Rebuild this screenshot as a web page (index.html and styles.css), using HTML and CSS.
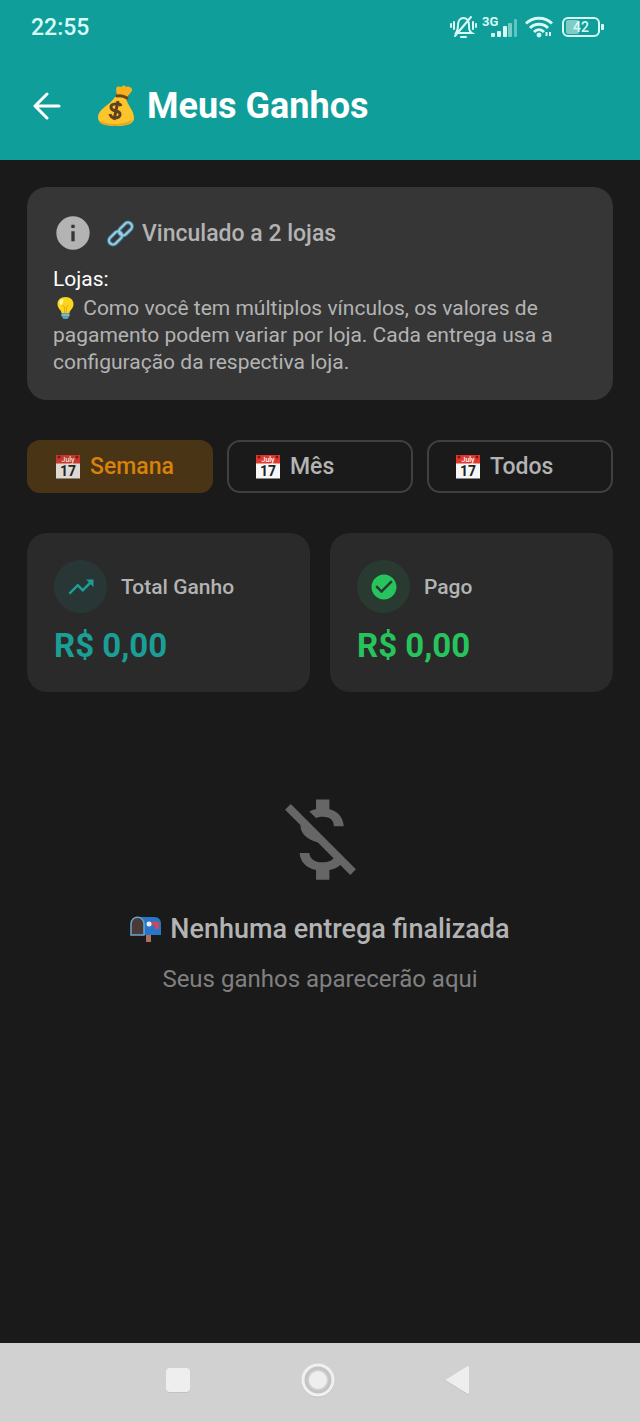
FILE: index.html
```html
<!DOCTYPE html>
<html lang="pt-BR">
<head>
<meta charset="utf-8">
<meta name="viewport" content="width=device-width, initial-scale=1">
<title>Meus Ganhos</title>
<link rel="stylesheet" href="styles.css">
</head>
<body>
<div class="screen">
  <header class="top">
    <div class="status">
      <span class="clock">22:55</span>
      <div class="status-icons">
        <svg width="27" height="26" viewBox="0 0 27 26" fill="none" stroke="#d8fbf7" stroke-width="2" stroke-linecap="round">
          <path d="M6 19h16c-3-2-3-4-3-8 0-4-2-7-5.500-7S8 7 8 11c0 4-.5 6-2 8zM5 22 21 3"/>
          <path d="M11 23h5"/>
          <path d="M1 10v3M4 8v7M23 8v7M26 10v3"/>
        </svg>
        <svg width="36" height="24" viewBox="0 0 36 24" fill="#d8fbf7">
          <text x="0" y="11" class="net">3G</text>
          <rect x="9" y="18" width="4" height="4" rx="1"/>
          <rect x="15" y="16" width="4" height="6" rx="1"/>
          <rect x="21" y="11" width="4" height="11" rx="1"/>
          <rect x="26" y="8" width="4" height="14" rx="1" opacity=".5"/>
          <rect x="32" y="4" width="3" height="18" rx="1" opacity=".4"/>
        </svg>
        <svg class="wifi" width="28" height="22" viewBox="0 0 28 22" fill="none" stroke="#d8fbf7" stroke-width="3">
          <path d="M1 7.500c7-7 19-7 26 0M5 12c5-5 13-5 18 0M9 16c3-3 7-3 10 0"/>
          <circle cx="14" cy="19" r="2" fill="#d8fbf7" stroke-width="1"/>
          <path stroke-width="2" d="M21.500 16v4M25 16v4"/>
        </svg>
        <svg width="43" height="20" viewBox="0 0 43 20" fill="none">
          <rect x="4" y="3" width="13" height="14" rx="2" fill="#7fcbc7"/>
          <rect x="1" y="1" width="36" height="18" rx="5" stroke="#d8fbf7" stroke-width="2"/>
          <rect x="39" y="7" width="3" height="6" rx="1" fill="#d8fbf7"/>
          <text x="19" y="15" class="battery">42</text>
        </svg>
      </div>
    </div>
    <div class="titlebar">
      <button class="back" type="button" aria-label="Voltar">
        <svg width="28" height="28" viewBox="0 0 28 28" fill="none" stroke="#fff" stroke-width="3" stroke-linecap="round" stroke-linejoin="round"><path d="M14 2 2 14l12 12M2 14h24"/></svg>
      </button>
      <h1>
        <svg width="38" height="42" viewBox="0 0 38 42" aria-hidden="true">
          <path fill="#f9b21d" d="M20 11c0-3-2-7 0-9 2-1 3 0 4 0 2-2 4-2 5 0 2-1 5 0 6 2 1 3-4 5-5 9z"/>
          <path fill="#fcc52c" d="M18 12c4-2 8-1 11 1 1 7 8 12 8 20 0 6-7 8-18 8S1 39 1 32c0-8 12-12 17-20z"/>
          <path fill="none" stroke="#eaa31c" stroke-width="2" d="M3 37c7 4 24 4 32-1"/>
          <path fill="none" stroke="#704414" stroke-width="3" stroke-linecap="round" d="M20 11c4-1 7 0 10 2"/>
          <path fill="none" stroke="#60401e" stroke-width="3" d="M24 21c-1-3-10-3-10 1 0 6 10 2 9 8-1 4-9 4-10-1M21 16l-4 19"/>
        </svg>
        Meus Ganhos
      </h1>
    </div>
  </header>

  <main class="content">
    <section class="notice">
      <div class="notice-head">
        <svg width="40" height="40" viewBox="0 0 24 24" fill="#b3b3b3"><path d="M13 9h-2V7h2m0 10h-2v-6h2m-1-9A10 10 0 0 0 2 12a10 10 0 0 0 10 10 10 10 0 0 0 10-10A10 10 0 0 0 12 2z"/></svg>
        <h2>
          <svg width="27" height="27" viewBox="0 0 27 27" fill="none" aria-hidden="true">
            <g stroke="#467f99" stroke-width="4">
              <rect x="1" y="14" width="15" height="8" rx="4" transform="rotate(-45 8.500 18)"/>
              <rect x="11" y="5" width="15" height="8" rx="4" transform="rotate(-45 18.500 9)"/>
            </g>
            <g stroke="#9bcde1" stroke-width="2">
              <rect x="1" y="14" width="15" height="8" rx="4" transform="rotate(-45 8.500 18)"/>
              <rect x="11" y="5" width="15" height="8" rx="4" transform="rotate(-45 18.500 9)"/>
            </g>
          </svg>
          Vinculado a 2 lojas
        </h2>
      </div>
      <p class="stores">Lojas:</p>
      <p class="hint"><svg class="bulb" width="25" height="22" viewBox="0 0 24 22" aria-hidden="true"><path fill="#fbd51e" d="M12 0C7 0 4 3 4 7c0 5 4 6 4 9h8c0-3 4-4 4-9 0-4-3-7-8-7z"/><path fill="#fff6a5" d="M9 2C6 3 5 6 7 8c2 0 4-4 2-6z"/><path fill="none" stroke="#e8a916" d="m9 8 2 2v6m4-8-2 2v6"/><path fill="#5d9db0" d="M8 16h8v3l-2 3h-4l-2-3z"/><path stroke="#a4cad4" d="M8 18h8"/></svg> Como você tem múltiplos vínculos, os valores de pagamento podem variar por loja. Cada entrega usa a configuração da respectiva loja.</p>
    </section>

    <nav class="filters" aria-label="Período">
      <button class="filter active" type="button" aria-pressed="true">
        <svg width="24" height="25" viewBox="0 0 24 25" aria-hidden="true">
          <path fill="#f7f7f7" d="M0 8h24v16.500H0z"/><path fill="#e0382e" d="M0 1h24v8.500H0z"/>
          <circle cx="3" cy="3" r="1.500" fill="#7c1c18"/><circle cx="21" cy="3" r="1.500" fill="#7c1c18"/>
          <text x="12" y="8" class="cal-month">July</text><text x="12" y="22" class="cal-day">17</text>
        </svg>
        Semana
      </button>
      <button class="filter" type="button" aria-pressed="false">
        <svg width="24" height="25" viewBox="0 0 24 25" aria-hidden="true">
          <path fill="#f7f7f7" d="M0 8h24v16.500H0z"/><path fill="#e0382e" d="M0 1h24v8.500H0z"/>
          <circle cx="3" cy="3" r="1.500" fill="#7c1c18"/><circle cx="21" cy="3" r="1.500" fill="#7c1c18"/>
          <text x="12" y="8" class="cal-month">July</text><text x="12" y="22" class="cal-day">17</text>
        </svg>
        Mês
      </button>
      <button class="filter" type="button" aria-pressed="false">
        <svg width="24" height="25" viewBox="0 0 24 25" aria-hidden="true">
          <path fill="#f7f7f7" d="M0 8h24v16.500H0z"/><path fill="#e0382e" d="M0 1h24v8.500H0z"/>
          <circle cx="3" cy="3" r="1.500" fill="#7c1c18"/><circle cx="21" cy="3" r="1.500" fill="#7c1c18"/>
          <text x="12" y="8" class="cal-month">July</text><text x="12" y="22" class="cal-day">17</text>
        </svg>
        Todos
      </button>
    </nav>

    <section class="totals">
      <article class="total earned">
        <div class="total-head">
          <span class="badge"><svg width="30" height="30" viewBox="0 0 24 24" fill="currentColor"><path d="M16 6l2.290 2.290-4.880 4.880-4-4L2 16.590 3.410 18l6-6 4 4 6.300-6.290L22 12V6z"/></svg></span>
          <h3>Total Ganho</h3>
        </div>
        <p class="amount">R$ 0,00</p>
      </article>
      <article class="total paid">
        <div class="total-head">
          <span class="badge"><svg width="30" height="30" viewBox="0 0 24 24" fill="currentColor"><path d="M12 2C6.500 2 2 6.500 2 12s4.500 10 10 10 10-4.500 10-10S17.500 2 12 2m-2 15-5-5 1.410-1.410L10 14.170l7.590-7.590L19 8z"/></svg></span>
          <h3>Pago</h3>
        </div>
        <p class="amount">R$ 0,00</p>
      </article>
    </section>

    <section class="empty">
      <svg width="107" height="107" viewBox="0 0 24 24" fill="#666" aria-hidden="true"><path d="M12.500 6.900C14.280 6.900 14.940 7.750 15 9H17.210C17.140 7.280 16.090 5.700 14 5.190V3H11V5.160C10.470 5.280 9.970 5.460 9.500 5.700L11 7.170C11.400 7 11.900 6.900 12.500 6.900M5.330 4.060L4.060 5.330L7.500 8.770C7.500 10.850 9.060 12 11.410 12.680L14.920 16.190C14.580 16.670 13.870 17.100 12.500 17.100C10.440 17.100 9.630 16.180 9.500 15H7.320C7.440 17.190 9.080 18.420 11 18.830V21H14V18.850C14.960 18.670 15.820 18.300 16.450 17.730L18.670 19.950L19.940 18.680L5.330 4.060Z"/></svg>
      <h2>
        <svg width="32" height="26" viewBox="0 0 32 26" aria-hidden="true">
          <path fill="#ad705c" d="M16 18h5v8h-5z"/>
          <path fill="#2876c9" d="M7 1h17c5 0 7 3 7 7v11H7z"/>
          <path fill="#4a3a37" stroke="#6ba6cf" stroke-width="1.500" d="M1 19V8c0-9 13-9 13 0v11z"/>
          <path fill="#d94452" d="M19 6h10v7h-4V9h-6z"/>
          <circle cx="19" cy="8" r="2.500" fill="#e8eef4"/>
        </svg>
        Nenhuma entrega finalizada
      </h2>
      <p>Seus ganhos aparecerão aqui</p>
    </section>
  </main>

  <footer class="navbar">
    <button type="button" aria-label="Recentes"><svg width="36" height="36" viewBox="0 0 36 36"><rect x="6" y="7" width="24" height="24" rx="4" fill="#c2c2c2"/><rect x="6" y="6" width="24" height="24" rx="4" fill="#eee"/></svg></button>
    <button type="button" aria-label="Início"><svg width="36" height="36" viewBox="0 0 36 36" fill="none"><circle cx="18" cy="19" r="15" stroke="#c2c2c2" stroke-width="3"/><circle cx="18" cy="18" r="12" stroke="#c4c4c4" stroke-width="3"/><circle cx="18" cy="18" r="15" stroke="#f0f0f0" stroke-width="3"/><circle cx="18" cy="18" r="9" fill="#eee"/></svg></button>
    <button type="button" aria-label="Voltar"><svg width="36" height="36" viewBox="0 0 36 36" stroke-width="2" stroke-linejoin="round"><path fill="#c2c2c2" stroke="#c2c2c2" d="M28 6v26L7 19z"/><path fill="#eee" stroke="#eee" d="M28 5v26L7 18z"/></svg></button>
  </footer>
</div>
</body>
</html>
```
FILE: styles.css
```css
* { box-sizing: border-box; }
body {
  margin: 0;
  background: #1a1a1a;
  color: #b3b3b3;
  font-family: Roboto, "Liberation Sans", sans-serif;
}
h1, h2, h3, p { margin: 0; }
h1, h2, h3 { font-weight: 500; }
svg { flex: none; }
button {
  font: inherit;
  color: inherit;
  border: 0;
  padding: 0;
  background: none;
}
.screen {
  min-height: 100vh;
  display: flex;
  flex-direction: column;
}

.top { background: #109e9a; color: #fff; }
.status {
  display: flex;
  align-items: center;
  justify-content: space-between;
  height: 54px;
  padding: 0 35px 0 31px;
  color: #d8fbf7;
}
.clock { font-size: 23px; font-weight: 500; }
.status-icons { display: flex; align-items: center; gap: 5px; }
.wifi { margin: 0 4px 0 2px; }
.net { font-size: 13px; font-weight: 700; }
.battery { font-size: 14px; font-weight: 500; text-anchor: middle; fill: #d8fbf7; }
.titlebar {
  display: flex;
  align-items: center;
  height: 106px;
  padding: 0 33px 2px;
  gap: 36px;
}
.back { display: flex; }
h1 {
  display: flex;
  align-items: center;
  gap: 12px;
  font-size: 36px;
  font-weight: 700;
}

.content { flex: 1; padding: 27px; }
.notice {
  padding: 26px 26px 24px;
  border-radius: 20px;
  background: #363636;
}
.notice-head { display: flex; align-items: center; gap: 14px; }
.notice-head h2 {
  display: flex;
  align-items: center;
  gap: 8px;
  font-size: 23px;
}
.stores { margin-top: 13px; font-size: 21px; line-height: 27px; color: #fff; }
.hint { margin-top: 2px; font-size: 21px; line-height: 27px; }
.bulb { vertical-align: -4px; }

.filters {
  display: grid;
  grid-template-columns: repeat(3, 1fr);
  gap: 14px;
  margin-top: 40px;
}
.filter {
  display: flex;
  align-items: center;
  gap: 10px;
  height: 53px;
  padding: 0 27px;
  border: 2px solid #404040;
  border-radius: 13px;
  font-size: 23px;
  font-weight: 500;
}
.filter.active { background: #4a3416; border-color: #4a3416; color: #d6820c; }
.filter.active svg { opacity: .85; }
.cal-month { font-size: 7px; font-weight: 500; text-anchor: middle; fill: #fff; }
.cal-day { font-size: 14px; font-weight: 700; text-anchor: middle; fill: #222; }

.totals {
  display: grid;
  grid-template-columns: 1fr 1fr;
  gap: 20px;
  margin-top: 40px;
}
.total { padding: 27px 27px 26px; border-radius: 20px; background: #2a2a2a; }
.total-head { display: flex; align-items: center; gap: 14px; }
.total-head h3 { font-size: 21px; }
.badge {
  display: flex;
  align-items: center;
  justify-content: center;
  width: 53px;
  height: 53px;
  border-radius: 50%;
}
.amount { margin-top: 13px; font-size: 33px; font-weight: 700; line-height: 40px; }
.earned .badge { background: #283735; color: #1a9e96; }
.paid .badge { background: #293b30; color: #27c45e; }
.earned .amount { color: #1a9e96; }
.paid .amount { color: #27c45e; }

.empty {
  display: flex;
  flex-direction: column;
  align-items: center;
  margin-top: 94px;
}
.empty h2 {
  display: flex;
  align-items: center;
  gap: 8px;
  margin-top: 20px;
  font-size: 27px;
  line-height: 32px;
}
.empty p { margin-top: 20px; font-size: 24px; line-height: 28px; color: #808080; }

.navbar {
  display: flex;
  align-items: center;
  justify-content: center;
  gap: 104px;
  height: 79px;
  padding: 0 5px 5px 0;
  background: #d1d1d1;
}
.navbar button { display: flex; }
```
